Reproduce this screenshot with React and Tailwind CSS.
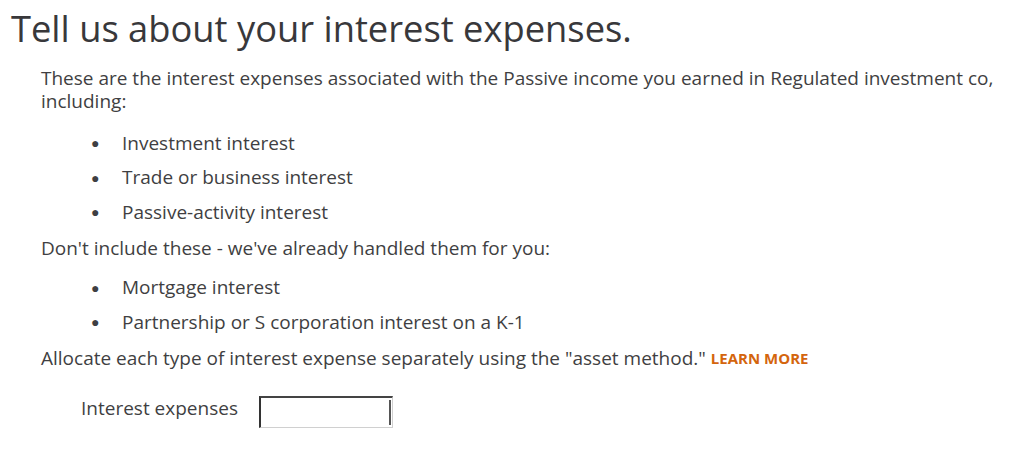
export default function App() {
  const font = { fontFamily: '"Open Sans", "Noto Sans", sans-serif' };
  const Bullet = ({ children }) => (
    <li className="flex items-center h-[34.5px]">
      <span className="w-[81px] pl-[50px] text-[14px] leading-none">●</span>
      <span>{children}</span>
    </li>
  );
  return (
    <div className="w-[1014px] h-[452px] bg-white text-[#3f3f42] overflow-hidden" style={font}>
      <h1 className="pl-[11px] pt-[5px] text-[36.3px] leading-[46px] text-[#38383b] font-normal">
        Tell us about your interest expenses.
      </h1>
      <div className="pl-[41px] pt-[16px] text-[19px] leading-[23px]">
        <p>
          These are the interest expenses associated with the Passive income you earned in Regulated investment co,
        </p>
        <p>including:</p>
        <ul className="mt-[13px]">
          <Bullet>Investment interest</Bullet>
          <Bullet>Trade or business interest</Bullet>
          <Bullet>Passive-activity interest</Bullet>
        </ul>
        <p className="mt-[2px] h-[34px] flex items-center">Don't include these - we've already handled them for you:</p>
        <ul className="mt-[5px]">
          <Bullet>Mortgage interest</Bullet>
          <Bullet>Partnership or S corporation interest on a K-1</Bullet>
        </ul>
        <p className="h-[38px] flex items-center">
          Allocate each type of interest expense separately using the "asset method."
          <span className="ml-[5px] text-[15px] font-bold text-[#d4650d]">LEARN MORE</span>
        </p>
        <div className="mt-[19px] flex items-start pl-[40px]">
          <span className="w-[178px]">Interest expenses</span>
          <div className="mt-[-1px] w-[134px] h-[32px] border-t-2 border-l-2 border-r border-b border-t-[#444] border-l-[#333] border-r-[#d0d0d0] border-b-[#d0d0d0] bg-white flex justify-end items-center">
            <div className="w-[2px] h-[25px] bg-[#555] mr-[1px]"></div>
          </div>
        </div>
      </div>
    </div>
  );
}
